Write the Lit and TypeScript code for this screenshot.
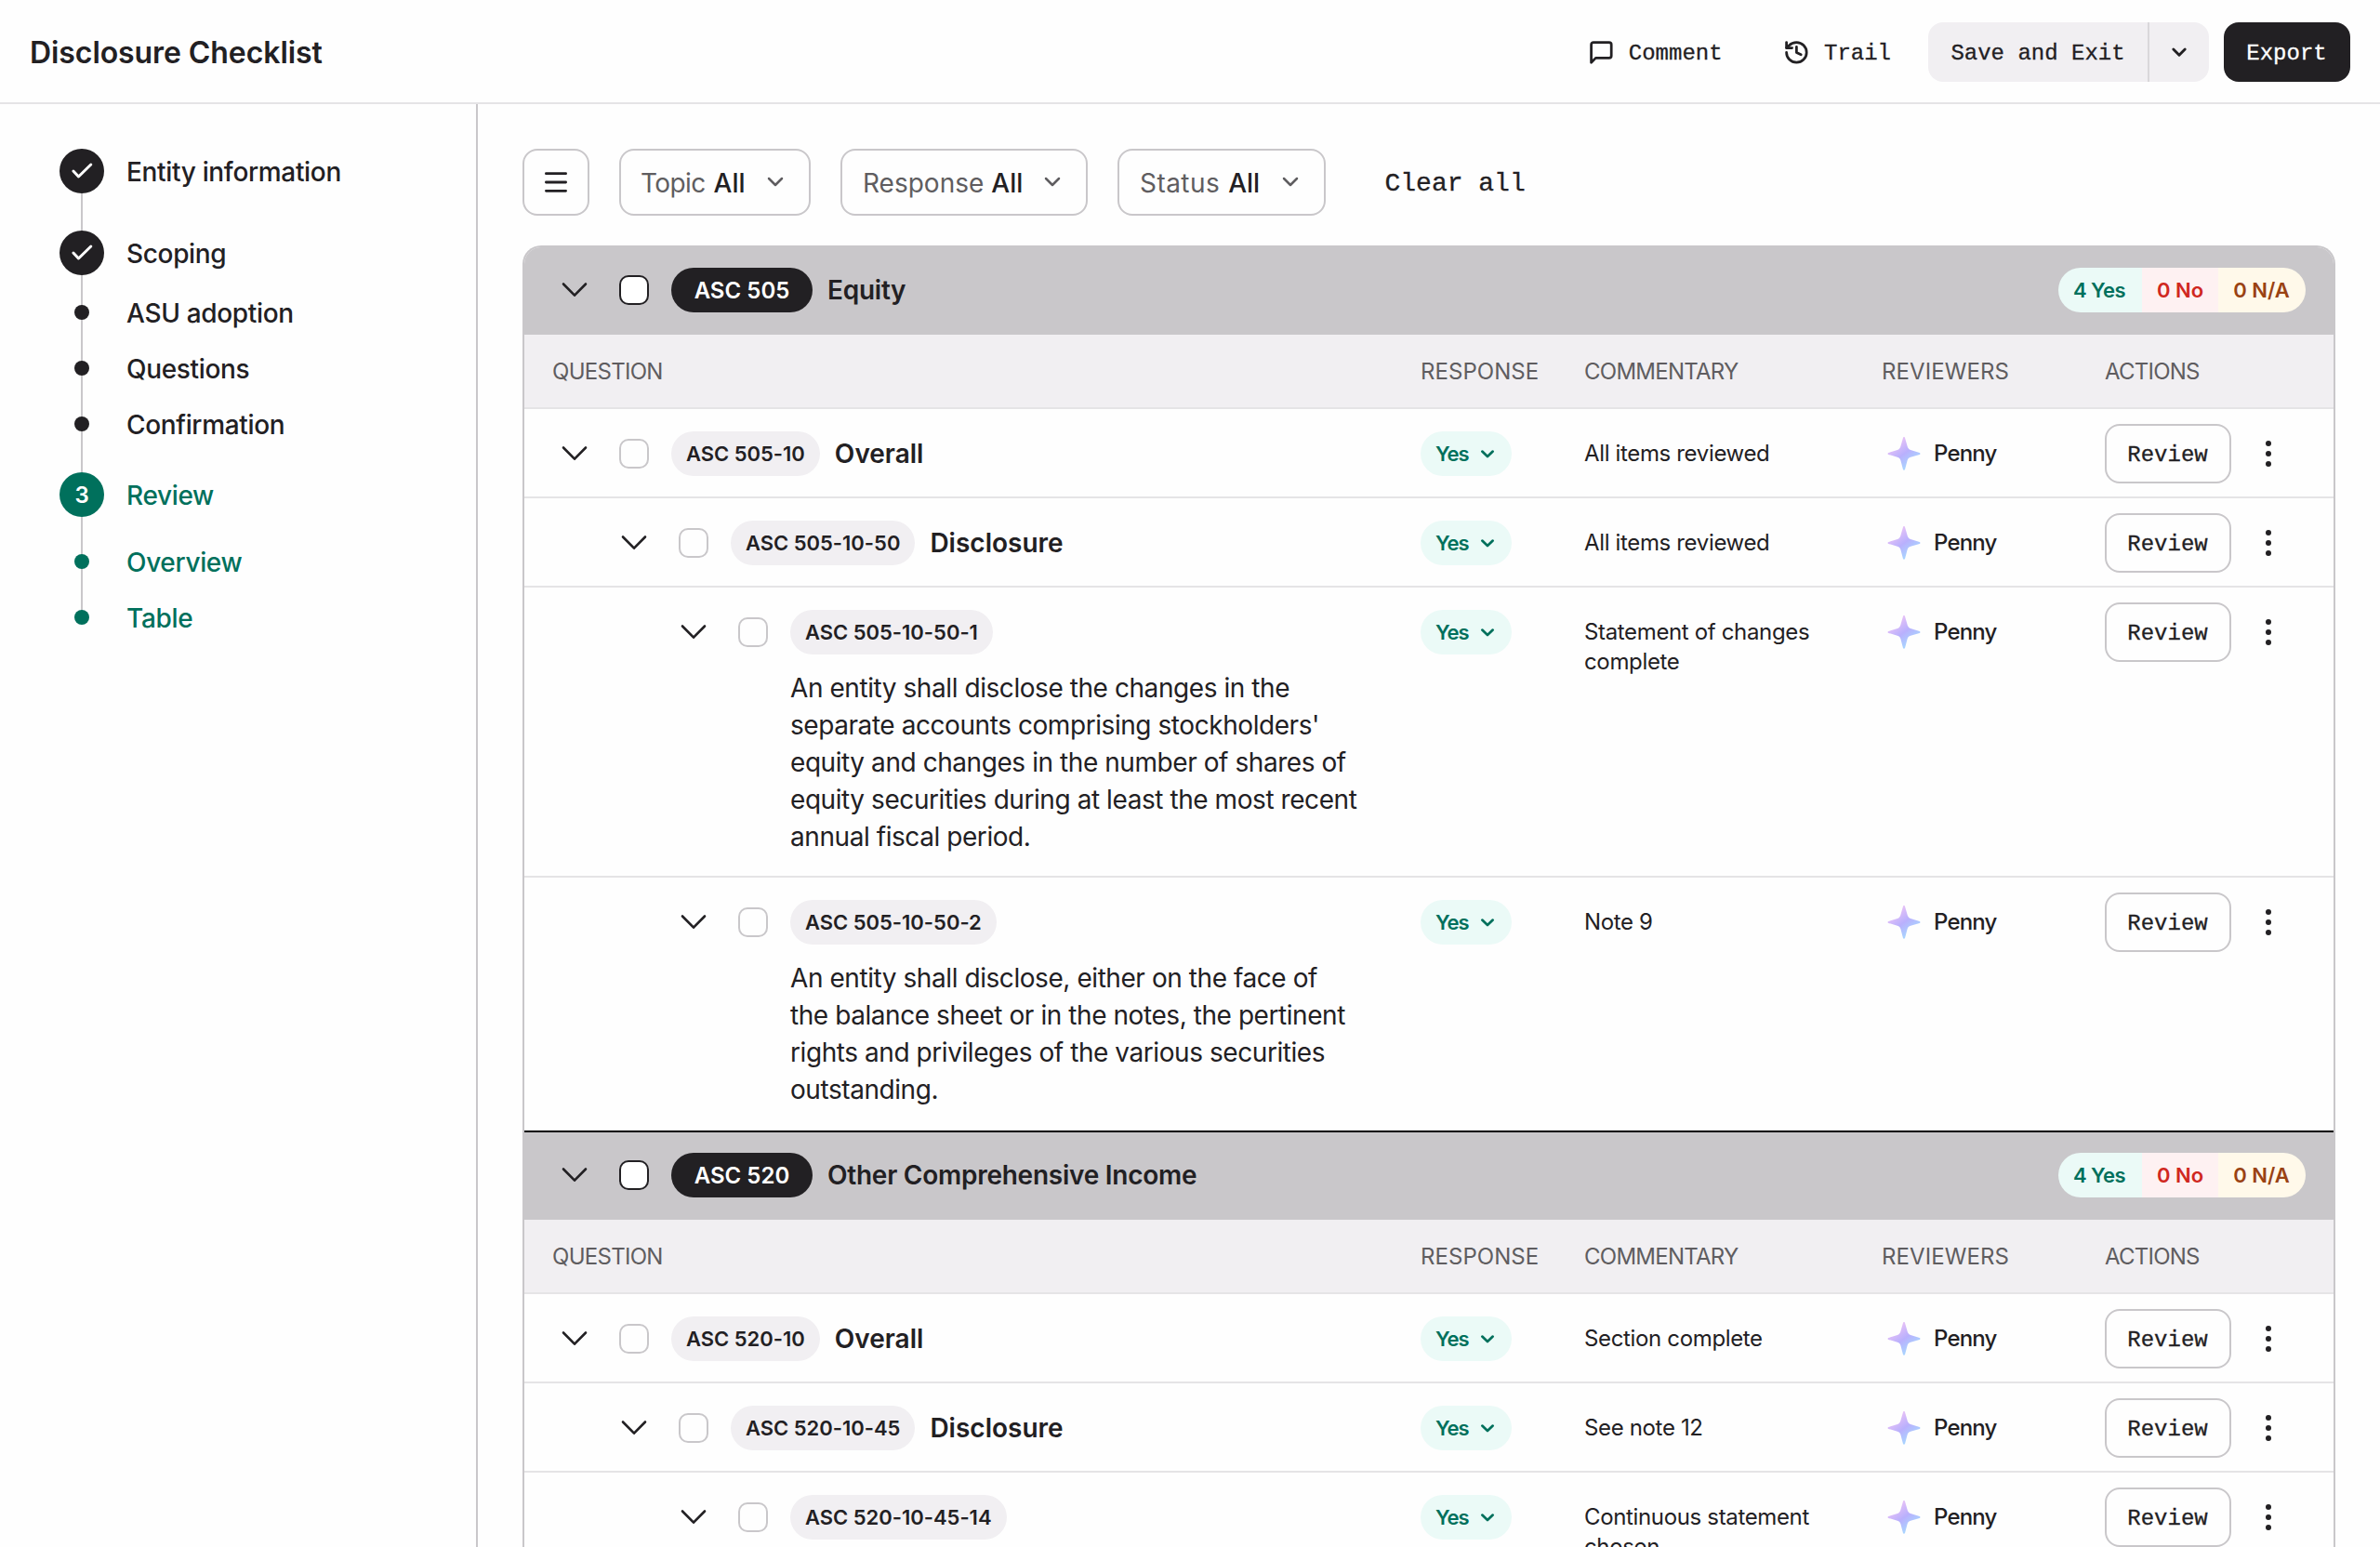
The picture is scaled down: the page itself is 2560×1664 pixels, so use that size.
import { LitElement, html, svg, css, nothing } from "lit";
import { customElement, property } from "lit/decorators.js";
import { classMap } from "lit/directives/class-map.js";

type Step = { label: string; kind: "done" | "current" | "sub"; mark?: string; active?: boolean };
type Row = { level: 1 | 2 | 3; code: string; title?: string; text?: string[]; note: string[] };
type Group = { code: string; title: string; rows: Row[] };

const STEPS: Step[] = [
  { label: "Entity information", kind: "done" },
  { label: "Scoping", kind: "done" },
  { label: "ASU adoption", kind: "sub" },
  { label: "Questions", kind: "sub" },
  { label: "Confirmation", kind: "sub" },
  { label: "Review", kind: "current", mark: "3", active: true },
  { label: "Overview", kind: "sub", active: true },
  { label: "Table", kind: "sub", active: true },
];

const FILTERS = [
  { name: "Topic", size: "topic" },
  { name: "Response", size: "response" },
  { name: "Status", size: "status" },
];

const GROUPS: Group[] = [
  {
    code: "ASC 505",
    title: "Equity",
    rows: [
      { level: 1, code: "ASC 505-10", title: "Overall", note: ["All items reviewed"] },
      { level: 2, code: "ASC 505-10-50", title: "Disclosure", note: ["All items reviewed"] },
      {
        level: 3,
        code: "ASC 505-10-50-1",
        text: [
          "An entity shall disclose the changes in the",
          "separate accounts comprising stockholders'",
          "equity and changes in the number of shares of",
          "equity securities during at least the most recent",
          "annual fiscal period.",
        ],
        note: ["Statement of changes", "complete"],
      },
      {
        level: 3,
        code: "ASC 505-10-50-2",
        text: [
          "An entity shall disclose, either on the face of",
          "the balance sheet or in the notes, the pertinent",
          "rights and privileges of the various securities",
          "outstanding.",
        ],
        note: ["Note 9"],
      },
    ],
  },
  {
    code: "ASC 520",
    title: "Other Comprehensive Income",
    rows: [
      { level: 1, code: "ASC 520-10", title: "Overall", note: ["Section complete"] },
      { level: 2, code: "ASC 520-10-45", title: "Disclosure", note: ["See note 12"] },
      { level: 3, code: "ASC 520-10-45-14", note: ["Continuous statement", "chosen"] },
    ],
  },
];

const ICONS: Record<string, { box: number; width: number; body: unknown }> = {
  comment: {
    box: 24,
    width: 2.3,
    body: svg`<path d="M21 15a2 2 0 0 1-2 2H7l-4 4V5a2 2 0 0 1 2-2h14a2 2 0 0 1 2 2z"/>`,
  },
  history: {
    box: 24,
    width: 2.3,
    body: svg`<path d="M3 12a9 9 0 1 0 9-9 9.75 9.75 0 0 0-6.74 2.74L3 8"/><path d="M3 3v5h5"/><path d="M12 7v5l4 2"/>`,
  },
  menu: { box: 32, width: 2.8, body: svg`<path d="M5.4 6.7h21.2M5.4 16h21.2M5.4 25.3h21.2"/>` },
  chevron: { box: 32, width: 2.6, body: svg`<path d="M4 9.5 16 21.7 28 9.5"/>` },
  small: { box: 24, width: 2.5, body: svg`<path d="M5 8l7 7 7-7"/>` },
  bold: { box: 24, width: 2.9, body: svg`<path d="M5.8 9l6.2 6.2L18.2 9"/>` },
  tiny: { box: 24, width: 2.7, body: svg`<path d="M6.3 9.600 12 15l5.700-5.400"/>` },
  check: { box: 48, width: 3, body: svg`<path d="M14.9 24l5.6 6 13.3-13"/>` },
};

@customElement("ui-icon")
class UiIcon extends LitElement {
  static styles = css`
    :host { display: block; flex: none; }
    svg { display: block; width: 100%; height: 100%; }
  `;
  @property() name = "chevron";
  render() {
    const i = ICONS[this.name];
    return html`<svg viewBox="0 0 ${i.box} ${i.box}" fill="none" stroke="currentColor" stroke-width=${i.width}
      stroke-linecap="round" stroke-linejoin="round">${i.body}</svg>`;
  }
}

@customElement("step-list")
class StepList extends LitElement {
  static styles = css`
    :host { display: block; font-size: 28px; font-weight: 500; letter-spacing: -0.012em; }
    .list {
      display: flex; flex-direction: column;
      background: linear-gradient(#c9c7ca, #c9c7ca) 23px 24px / 2px 480px no-repeat;
    }
    .step { display: grid; grid-template-columns: 48px 1fr; column-gap: 24px; align-items: center; height: 60px; }
    .label { padding-top: 1px; }
    .main { height: 48px; }
    .main + .main { margin-top: 40px; }
    .main + .sub { margin-top: 10px; }
    .sub + .main { margin-top: 22px; }
    .current + .sub { margin-top: 18px; }
    .active { color: #00705c; }
    .disc {
      display: flex; align-items: center; justify-content: center; width: 48px; height: 48px;
      border-radius: 50%; background: #222023; color: #fff; font-size: 24px; font-weight: 600;
    }
    .dot { width: 16px; height: 16px; border-radius: 50%; background: #222023; justify-self: center; }
    .active .disc, .active .dot { background: #00705c; }
    ui-icon { width: 48px; height: 48px; }
  `;
  render() {
    return html`<div class="list">
      ${STEPS.map((s) => html`<div class=${classMap({
          step: true, main: s.kind !== "sub", sub: s.kind === "sub", current: s.kind === "current", active: !!s.active,
        })}>
        ${s.kind === "sub"
          ? html`<span class="dot"></span>`
          : html`<span class="disc">${s.mark ?? html`<ui-icon name="check"></ui-icon>`}</span>`}
        <span class="label">${s.label}</span>
      </div>`)}
    </div>`;
  }
}

@customElement("check-table")
class CheckTable extends LitElement {
  static styles = css`
    :host { display: block; }
    * { box-sizing: border-box; }
    .table { border: 2px solid #c9c7ca; border-bottom: 0; border-radius: 20px 20px 0 0; overflow: hidden; }
    .band {
      display: flex; align-items: center; height: 96px; padding: 0 30px 0 38px;
      background: #c9c7ca; font-size: 28px; font-weight: 600; letter-spacing: -0.009em;
    }
    .band.first { height: 94px; padding-bottom: 2px; }
    .band.next { border-top: 2px solid #000; padding-bottom: 2px; }
    ui-icon.chev { width: 32px; height: 32px; }
    .box { flex: none; width: 32px; height: 32px; margin: 0 24px 0 32px; border: 2px solid #c9c7ca; border-radius: 10px; background: #fefefe; }
    .band .box { border-color: #222023; background: #fff; }
    .pill {
      display: flex; align-items: center; height: 48px; padding: 0 16px; margin-right: 16px; border-radius: 24px;
      background: #f1eff2; font-size: 22px; font-weight: 600; letter-spacing: -0.001em; white-space: nowrap;
    }
    .band .pill { justify-content: center; width: 152px; padding: 0; background: #222023; color: #fff; font-size: 24px; letter-spacing: 0.001em; }
    .totals { display: flex; margin-left: auto; border-radius: 24px; overflow: hidden; font-size: 22px; letter-spacing: 0; }
    .total { display: flex; align-items: center; justify-content: center; height: 48px; white-space: nowrap; }
    .total.yes { width: 90px; padding-right: 2px; background: #ebfaf7; color: #00705c; letter-spacing: -0.025em; }
    .total.no { width: 82px; background: #fef1f2; color: #d0281f; }
    .total.na { width: 94px; padding-right: 1px; background: #fff9ea; color: #9a4213; }
    .cols, .row { display: grid; grid-template-columns: 964px 176px 320px 240px 1fr; border-bottom: 2px solid #e5e4e6; }
    .cols { height: 80px; padding-top: 1px; align-items: center; background: #f1eff2; color: #5f5d60; font-size: 24px; }
    .cols > :nth-child(1) { padding-left: 30px; letter-spacing: -0.03em; }
    .cols > :nth-child(2) { letter-spacing: 0.002em; }
    .cols > :nth-child(3) { letter-spacing: -0.031em; }
    .cols > :nth-child(4) { letter-spacing: 0.004em; }
    .cols > :nth-child(5) { letter-spacing: -0.032em; }
    .row { min-height: 96px; }
    .row.last { border-bottom: 0; }
    .question { padding-top: 24px; padding-bottom: 22px; }
    .last .question { padding-bottom: 24px; }
    .lvl1 { padding-left: 38px; }
    .lvl2 { padding-left: 102px; }
    .lvl3 { padding-left: 166px; }
    .head { display: flex; align-items: center; font-size: 28px; font-weight: 600; }
    .desc { padding: 16px 0 0 120px; font-size: 28px; line-height: 40px; letter-spacing: -0.0155em; white-space: nowrap; }
    .answer {
      display: flex; align-items: center; justify-content: space-between; width: 98px; height: 48px; margin-top: 24px;
      padding: 0 14px 0 16px; border-radius: 24px; background: #ebfaf7; color: #00705c; font-size: 22px; font-weight: 600;
      letter-spacing: -0.045em;
    }
    .answer ui-icon { width: 24px; height: 24px; }
    .note { padding-top: 32px; font-size: 24px; line-height: 32px; letter-spacing: -0.0145em; white-space: nowrap; }
    .who { display: flex; align-items: center; gap: 14px; height: 36px; margin: 30px 0 0 6px; font-size: 24px; font-weight: 500; letter-spacing: -0.035em; }
    .who span { line-height: 32px; padding-bottom: 1px; }
    .star { display: block; width: 36px; height: 36px; }
    .acts { display: flex; align-items: center; gap: 37px; height: 64px; margin-top: 16px; }
    .review {
      display: flex; align-items: center; justify-content: center; width: 136px; height: 64px; padding: 3px 1px 0 0; border: 2px solid #c9c7ca;
      border-radius: 16px; font: 24px "Liberation Mono", monospace; -webkit-text-stroke: 0.3px currentColor;
    }
    .dots { display: flex; flex-direction: column; gap: 4.7px; }
    .dots i { width: 6px; height: 6px; border-radius: 50%; background: #222023; }
  `;
  private star() {
    return html`<svg class="star" viewBox="0 0 36 36">
      <defs><linearGradient id="g" x1="0.2" y1="0.15" x2="0.75" y2="0.9">
        <stop offset="0" stop-color="#ecc3f6"/><stop offset="0.5" stop-color="#b9b0fd"/><stop offset="1" stop-color="#a6dcff"/>
      </linearGradient></defs>
      <path fill="url(#g)" d="M18 0c.6 0 .9.5 1.1 1.2l2.6 9c.5 1.900 1.600 3.100 3.400 3.700l9.600 3.200c1.100.4 1.100 1.400 0 1.800l-9.600 2.800c-1.900.6-3 1.700-3.500 3.500l-2.500 9.600c-.3 1.300-1.900 1.300-2.200 0l-2.500-9.600c-.5-1.800-1.600-2.900-3.500-3.500l-9.600-2.800c-1.100-.4-1.100-1.400 0-1.800l9.600-3.200c1.800-.6 2.900-1.800 3.400-3.700l2.600-9C17.100.5 17.400 0 18 0z"/>
    </svg>`;
  }
  private row(r: Row, last: boolean) {
    return html`<div class=${classMap({ row: true, last })}>
      <div class="question lvl${r.level}">
        <div class="head">
          <ui-icon class="chev"></ui-icon><span class="box"></span><span class="pill">${r.code}</span>${r.title ?? nothing}
        </div>
        ${r.text ? html`<div class="desc">${r.text.map((t) => html`<div>${t}</div>`)}</div>` : nothing}
      </div>
      <div><div class="answer">Yes<ui-icon name="tiny"></ui-icon></div></div>
      <div class="note">${r.note.map((t) => html`<div>${t}</div>`)}</div>
      <div><div class="who">${this.star()}<span>Penny</span></div></div>
      <div class="acts"><span class="review">Review</span><span class="dots"><i></i><i></i><i></i></span></div>
    </div>`;
  }
  render() {
    return html`<div class="table">
      ${GROUPS.map((g, n) => html`
        <div class="band ${n ? "next" : "first"}">
          <ui-icon class="chev"></ui-icon><span class="box"></span><span class="pill">${g.code}</span>${g.title}
          <div class="totals"><span class="total yes">4 Yes</span><span class="total no">0 No</span><span class="total na">0 N/A</span></div>
        </div>
        <div class="cols"><span>QUESTION</span><span>RESPONSE</span><span>COMMENTARY</span><span>REVIEWERS</span><span>ACTIONS</span></div>
        ${g.rows.map((r, i) => this.row(r, i === g.rows.length - 1))}`)}
    </div>`;
  }
}

@customElement("app-root")
class AppRoot extends LitElement {
  static styles = css`
    :host { display: block; height: 1664px; overflow: hidden; background: #fefefe; color: #222023; font-family: Inter, "Liberation Sans", sans-serif; }
    * { box-sizing: border-box; }
    .page { display: flex; flex-direction: column; height: 100%; }
    .top { display: flex; align-items: center; justify-content: space-between; flex: none; height: 112px; padding: 0 32px; border-bottom: 2px solid #e5e4e6; }
    .title { font-size: 32px; font-weight: 600; padding-top: 3px; letter-spacing: -0.0025em; }
    .mono { font-family: "Liberation Mono", monospace; font-size: 24px; -webkit-text-stroke: 0.3px currentColor; white-space: pre; }
    .mono .word { padding-top: 3px; }
    .tools { display: flex; align-items: center; gap: 16px; padding-top: 2px; }
    .tool { display: flex; align-items: center; gap: 15px; padding: 0 24px; }
    .tool:first-child { padding-right: 25.6px; }
    .tool ui-icon { width: 28.8px; height: 28.8px; }
    .split { display: flex; height: 64px; border-radius: 16px; background: #f1eff2; }
    .save { display: flex; align-items: center; justify-content: center; width: 236px; }
    .more { display: flex; align-items: center; justify-content: center; width: 66px; border-left: 2px solid #d9d7da; }
    .more ui-icon, .filter ui-icon { width: 24px; height: 24px; }
    .export { display: flex; align-items: center; justify-content: center; width: 136px; height: 64px; padding-right: 1px; border-radius: 16px; background: #222023; color: #fff; }
    .body { display: flex; flex: 1; min-height: 0; }
    .side { flex: none; width: 514px; padding: 48px 64px; border-right: 2px solid #c9c7ca; }
    .main { flex: 1; padding: 48px 48px 0; }
    .filters { display: flex; align-items: center; gap: 32px; height: 72px; margin-bottom: 32px; }
    .menu, .filter { display: flex; align-items: center; height: 72px; border: 2px solid #c9c7ca; border-radius: 16px; font-size: 28px; }
    .menu { width: 72px; justify-content: center; }
    .menu ui-icon { width: 32px; height: 32px; }
    .filter { justify-content: space-between; padding: 0 24px 0 22px; color: #5f5d60; }
    .text { padding-top: 1px; }
    .name { margin-right: 8px; }
    .topic { width: 206px; padding-left: 21px; }
    .topic .name { margin-right: 9px; letter-spacing: -0.022em; }
    .response { width: 266px; }
    .status { width: 224px; }
    .status .name { letter-spacing: 0.016em; margin-right: 9px; }
    .all { color: #222023; font-weight: 500; }
    .clear { margin-left: 31.5px; padding-top: 3px; font-size: 28px; }
  `;
  render() {
    return html`<div class="page">
      <header class="top">
        <div class="title">Disclosure Checklist</div>
        <div class="tools mono">
          <span class="tool"><ui-icon name="comment"></ui-icon><span class="word">Comment</span></span>
          <span class="tool"><ui-icon name="history"></ui-icon><span class="word">Trail</span></span>
          <div class="split"><span class="save"><span class="word">Save and Exit</span></span><span class="more"><ui-icon name="bold"></ui-icon></span></div>
          <span class="export"><span class="word">Export</span></span>
        </div>
      </header>
      <div class="body">
        <nav class="side"><step-list></step-list></nav>
        <main class="main">
          <div class="filters">
            <span class="menu"><ui-icon name="menu"></ui-icon></span>
            ${FILTERS.map((f) => html`<span class="filter ${f.size}">
              <span class="text"><span class="name">${f.name}</span><span class="all">All</span></span><ui-icon name="small"></ui-icon>
            </span>`)}
            <span class="clear mono">Clear all</span>
          </div>
          <check-table></check-table>
        </main>
      </div>
    </div>`;
  }
}
